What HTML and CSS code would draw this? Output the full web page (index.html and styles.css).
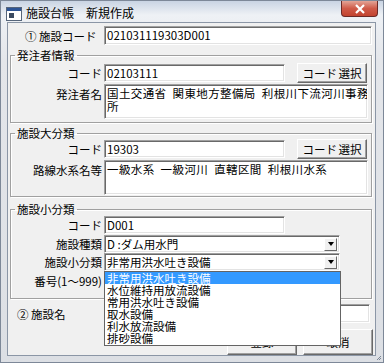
FILE: index.html
```html
<!DOCTYPE html>
<html lang="ja">
<head>
  <meta charset="UTF-8">
  <meta name="viewport" content="width=device-width, initial-scale=1.0">
  <title>施設台帳　新規作成</title>
  <link rel="stylesheet" href="styles.css">
</head>
<body>
  <div class="window">
    <div class="titlebar">
      <svg class="app-icon" width="16" height="14" viewBox="0 0 16 14">
        <rect x="0.5" y="0.5" width="15" height="13" fill="#fff" stroke="#56657a"/>
        <rect x="1" y="1" width="14" height="3" fill="#2d5596"/>
        <rect x="3" y="6" width="5" height="5" fill="#3a4a60"/>
      </svg>
      <span class="title">施設台帳　新規作成</span>
      <div class="close-btn">
        <svg width="12" height="10" viewBox="0 0 12 10">
          <path d="M2 1 L10 9 M10 1 L2 9" stroke="#fff" stroke-width="2.2"/>
        </svg>
      </div>
    </div>

    <div class="client">
      <div class="top-row">
        <span class="top-label">① 施設コード</span>
        <div class="field top-field">021031119303D001</div>
      </div>

      <fieldset class="group group-orderer">
        <legend>発注者情報</legend>
        <div class="form-grid">
          <span class="label">コード</span>
          <div class="code-line">
            <div class="field code-field">02103111</div>
            <button class="btn code-btn">コード 選択</button>
          </div>
          <span class="label label-top">発注者名</span>
          <div class="field memo">国土交通省 関東地方整備局 利根川下流河川事務<br>所</div>
        </div>
      </fieldset>

      <fieldset class="group group-major">
        <legend>施設大分類</legend>
        <div class="form-grid">
          <span class="label">コード</span>
          <div class="code-line">
            <div class="field code-field">19303</div>
            <button class="btn code-btn">コード 選択</button>
          </div>
          <span class="label label-top">路線水系名等</span>
          <div class="field memo">一級水系 一級河川 直轄区間 利根川水系</div>
        </div>
      </fieldset>

      <fieldset class="group group-minor">
        <legend>施設小分類</legend>
        <div class="form-grid">
          <span class="label">コード</span>
          <div class="code-line">
            <div class="field code-field">D001</div>
          </div>
          <span class="label">施設種類</span>
          <div class="select">
            <span class="select-text">D :ダム用水門</span>
            <span class="select-btn"><i class="arrow"></i></span>
          </div>
          <span class="label">施設小分類</span>
          <div class="select open">
            <span class="select-text">非常用洪水吐き設備</span>
            <span class="select-btn"><i class="arrow"></i></span>
            <ul class="dropdown">
              <li class="selected">非常用洪水吐き設備</li>
              <li>水位維持用放流設備</li>
              <li>常用洪水吐き設備</li>
              <li>取水設備</li>
              <li>利水放流設備</li>
              <li>排砂設備</li>
            </ul>
          </div>
          <span class="label">番号(1～999)</span>
          <div class="code-line">
            <div class="field num-field"></div>
          </div>
        </div>
      </fieldset>

      <div class="name-row">
        <span class="name-label">② 施設名</span>
        <div class="field name-field"></div>
      </div>

      <div class="actions">
        <button class="btn action-btn">登録</button>
        <button class="btn action-btn">取消</button>
      </div>
    </div>
    <svg class="grip" width="6" height="6" viewBox="0 0 6 6">
      <path d="M5 1 L1 5 M5 3 L3 5" stroke="#7d8796" stroke-width="1"/>
    </svg>
  </div>
</body>
</html>
```

FILE: styles.css
```css
body {
  margin: 0;
  font-family: "Noto Sans CJK JP", sans-serif;
  font-size: 11.5px;
  color: #000;
}

.window {
  position: relative;
  width: 384px;
  height: 363px;
  box-sizing: border-box;
  border: 1px solid #7d8898;
  background: linear-gradient(#c9d4e3, #eef1f5 14px, #e4e6ea 60px, #dcdfe4);
}

/* title bar */
.titlebar {
  height: 21px;
  display: flex;
  align-items: center;
  position: relative;
}

.app-icon {
  margin-left: 5px;
  margin-top: 4px;
}

.title {
  margin-left: 4px;
  margin-top: 3px;
  line-height: 12px;
  font-size: 12px;
}

.close-btn {
  position: absolute;
  top: 0;
  right: 5px;
  width: 37px;
  height: 16px;
  box-sizing: border-box;
  border: 1px solid #6b2a26;
  border-top: none;
  border-radius: 0 0 4px 4px;
  background: linear-gradient(#e3a496, #cf5a48 50%, #c2432f);
  display: flex;
  align-items: center;
  justify-content: center;
}

/* client area */
.client {
  margin: 0 7px 0 6px;
  height: 334px;
  box-sizing: border-box;
  border: 1px solid #8b96a6;
  background: #f0f0f0;
}

.top-row {
  display: flex;
  align-items: center;
  margin-top: 3px;
  height: 19px;
}

.top-label {
  width: 96px;
  box-sizing: border-box;
  padding-left: 17px;
  line-height: 12px;
}

.field {
  box-sizing: border-box;
  background: #fff;
  border: 1px solid;
  border-color: #a0a0a0 #fff #fff #a0a0a0;
  box-shadow: inset 1px 1px 0 #696969, inset -1px -1px 0 #e3e3e3;
  padding: 2px 2px 0;
  line-height: 13px;
  white-space: nowrap;
  overflow: hidden;
  word-spacing: 3px;
}

.top-field {
  width: 268px;
  height: 19px;
}

/* group boxes */
.group {
  margin: 4px 0 0 2px;
  width: 362px;
  box-sizing: border-box;
  padding: 0 0 3px;
  min-width: 0;
  border: 1px solid #a0a0a0;
  box-shadow: inset 1px 1px 0 #fff, 1px 1px 0 #fff;
}

.group legend {
  margin-left: 4px;
  padding: 0 2px;
  line-height: 12px;
}

.group-orderer {
  padding-top: 2px;
}

.group-major {
  padding-bottom: 1px;
}

.group-minor {
  margin-top: 6px;
  padding-bottom: 7px;
}

.form-grid {
  display: grid;
  grid-template-columns: 91px 1fr;
  column-gap: 2px;
  row-gap: 1px;
}

.group-minor .form-grid {
  row-gap: 0;
}

.label {
  text-align: right;
  align-self: center;
  line-height: 12px;
  white-space: nowrap;
}

.label-top {
  align-self: start;
  margin-top: 4px;
}

.code-line {
  display: flex;
  align-items: center;
  height: 20px;
}

.code-field {
  width: 181px;
  height: 18px;
}

.num-field {
  width: 60px;
  height: 18px;
}

.memo {
  width: 264px;
  height: 35px;
  letter-spacing: 0.4px;
}

.btn {
  font-family: "Noto Sans CJK JP", sans-serif;
  font-size: 11.5px;
  color: #000;
  background: #f0f0f0;
  border: 1px solid;
  border-color: #fff #696969 #696969 #fff;
  box-shadow: inset -1px -1px 0 #a0a0a0;
  padding: 0;
  line-height: 12px;
  word-spacing: -1px;
}

.code-btn {
  margin-left: 12px;
  width: 70px;
  height: 20px;
}

/* combo boxes */
.select {
  position: relative;
  display: flex;
  align-items: center;
  width: 236px;
  height: 18px;
  box-sizing: border-box;
  background: #fff;
  border: 1px solid;
  border-color: #a0a0a0 #fff #fff #a0a0a0;
  box-shadow: inset 1px 1px 0 #696969, inset -1px -1px 0 #e3e3e3;
}

.select-text {
  flex: 1;
  padding-left: 2px;
  line-height: 12px;
}

.select-btn {
  width: 13px;
  height: 13px;
  margin-right: 2px;
  box-sizing: border-box;
  background: #f0f0f0;
  border: 1px solid;
  border-color: #fff #696969 #696969 #fff;
  display: flex;
  align-items: center;
  justify-content: center;
}

.arrow {
  width: 0;
  height: 0;
  border-left: 3px solid transparent;
  border-right: 3px solid transparent;
  border-top: 4px solid #000;
}

.dropdown {
  position: absolute;
  top: 17px;
  left: -1px;
  width: 235px;
  margin: 0;
  padding: 0 0 1px;
  list-style: none;
  background: #fff;
  border: 1px solid #646464;
  z-index: 2;
}

.dropdown li {
  height: 12px;
  line-height: 12px;
  padding-left: 2px;
}

.dropdown .selected {
  background: #3399ff;
  color: #fff;
}

/* bottom rows */
.name-row {
  display: flex;
  align-items: center;
  margin-top: 5px;
  height: 19px;
}

.name-label {
  width: 96px;
  box-sizing: border-box;
  padding-left: 9px;
  line-height: 12px;
}

.name-field {
  width: 266px;
  height: 19px;
}

.actions {
  display: flex;
  justify-content: flex-end;
  gap: 6px;
  margin-top: 6px;
  padding-right: 2px;
}

.action-btn {
  width: 70px;
  height: 26px;
}

.grip {
  position: absolute;
  right: 1px;
  bottom: 1px;
}
```
